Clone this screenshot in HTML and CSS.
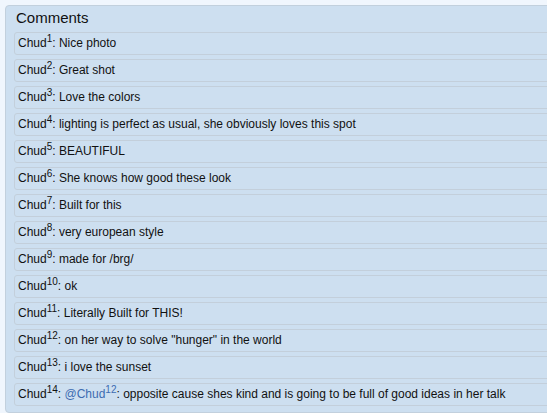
FILE: index.html
```html
<!DOCTYPE html>
<html lang="en">
<head>
  <meta charset="UTF-8">
  <meta name="viewport" content="width=device-width, initial-scale=1.0">
  <title>Comments</title>
  <link rel="stylesheet" href="styles.css">
</head>
<body>
  <div class="panel">
    <div class="panel-title">Comments</div>

    <!-- comment list -->
    <div class="comments">
      <div class="comment"><span class="author">Chud<sup>1</sup></span>: Nice photo</div>
      <div class="comment"><span class="author">Chud<sup>2</sup></span>: Great shot</div>
      <div class="comment"><span class="author">Chud<sup>3</sup></span>: Love the colors</div>
      <div class="comment"><span class="author">Chud<sup>4</sup></span>: lighting is perfect as usual, she obviously loves this spot</div>
      <div class="comment"><span class="author">Chud<sup>5</sup></span>: BEAUTIFUL</div>
      <div class="comment"><span class="author">Chud<sup>6</sup></span>: She knows how good these look</div>
      <div class="comment"><span class="author">Chud<sup>7</sup></span>: Built for this</div>
      <div class="comment"><span class="author">Chud<sup>8</sup></span>: very european style</div>
      <div class="comment"><span class="author">Chud<sup>9</sup></span>: made for /brg/</div>
      <div class="comment"><span class="author">Chud<sup>10</sup></span>: ok</div>
      <div class="comment"><span class="author">Chud<sup>11</sup></span>: Literally Built for THIS!</div>
      <div class="comment"><span class="author">Chud<sup>12</sup></span>: on her way to solve "hunger" in the world</div>
      <div class="comment"><span class="author">Chud<sup>13</sup></span>: i love the sunset</div>
      <div class="comment"><span class="author">Chud<sup>14</sup></span>: <span class="mention">@Chud<sup>12</sup></span>: opposite cause shes kind and is going to be full of good ideas in her talk</div>
    </div>
  </div>
</body>
</html>
```

FILE: styles.css
```css
body {
  margin: 0;
  padding: 5px;
  background-color: #f0f6fd;
  font-family: "Liberation Sans", Arial, sans-serif;
  color: #111;
  overflow: hidden;
}
.panel {
  width: 570px;
  padding: 0 0 6px 8px;
  background-color: #cddff0;
  border: 1px solid #c2d0dd;
  border-radius: 4px;
}
.panel-title {
  font-size: 15px;
  padding: 3px 0 0 2px;
  height: 23px;
}
.comments {
  display: flex;
  flex-direction: column;
  gap: 4px;
}
.comment {
  height: 21px;
  line-height: 21px;
  padding: 0 3px;
  font-size: 12px;
  border: 1px solid #c3cfdb;
  border-radius: 3px;
  white-space: nowrap;
}
.comment sup {
  font-size: 10px;
  line-height: 0;
  vertical-align: 5px;
}
.mention {
  color: #3d6cb0;
}
```
